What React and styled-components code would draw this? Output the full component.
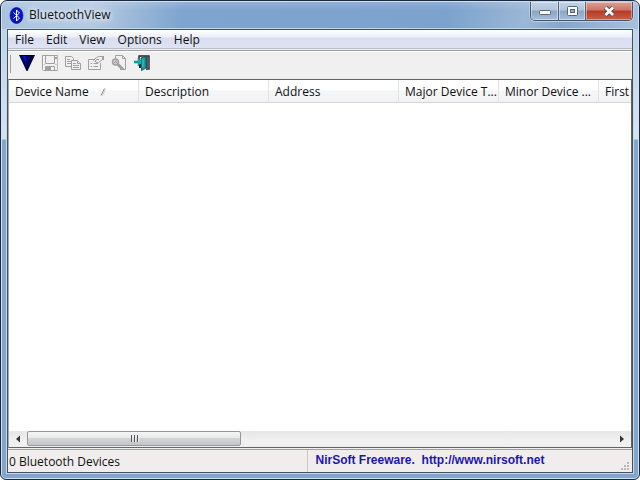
import React from "react";
import styled, { createGlobalStyle } from "styled-components";

//
// Component Styles
//
const GlobalStyle = createGlobalStyle`
    * {
        box-sizing: border-box;
    }

    body {
        margin: 0;
        background: #fff;
        font-family: "Open Sans", "Noto Sans", sans-serif;
        font-size: 12px;
        color: #111;
    }

    button {
        font: inherit;
        color: inherit;
        border: 0;
        padding: 0;
        background: none;
    }
`;

const Window = styled.div`
    display: flex;
    flex-direction: column;
    min-height: 100vh;
    padding: 0 6px 6px;
    border: 1px solid #1b2940;
    border-radius: 7px 7px 6px 6px;
    box-shadow: inset 0 0 0 1px #cfe2f3;
    background: linear-gradient(#b9cee5 0, #d7e4f0 138px, #86a5ca 139px, #84a4cb 100%);
`;

const TitleBar = styled.header`
    display: flex;
    align-items: flex-start;
    height: 27px;
    margin: 1px -5px 0;
    padding-left: 7px;
    border-radius: 5px 5px 0 0;
    background:
        linear-gradient(rgba(255, 255, 255, 0.15), rgba(255, 255, 255, 0) 30%),
        linear-gradient(100deg, #a9c3df 0, #b4cae2 90px, #7fa4cf 180px, #7ca2cd 70%, #9bb7d6 82%, #84a7cf 88%, #a8c1dd 100%);
`;

const Title = styled.h1`
    flex: 1;
    margin: 0 0 0 5px;
    font-size: 12px;
    font-weight: 400;
    line-height: 26px;
    text-shadow: 0 0 6px #fff, 0 0 8px #fff;
`;

const TitleIcon = styled.svg`
    margin-top: 4px;
`;

const Captions = styled.div`
    display: flex;
    margin-right: 5px;
    border: 1px solid #43546c;
    border-top: 0;
    border-radius: 0 0 5px 5px;
    overflow: hidden;
    box-shadow: 0 0 0 1px #bdd2e8;
`;

const Caption = styled.button`
    display: flex;
    align-items: center;
    justify-content: center;
    width: ${(props) => (props.$close ? 47 : 27)}px;
    height: 18px;
    border-left: ${(props) => (props.$first ? "0" : "1px solid #54657d")};
    box-shadow: inset 0 0 0 1px rgba(255, 255, 255, 0.4);
    background: ${(props) =>
        props.$close
            ? "linear-gradient(#dda093 0, #cb7565 45%, #b83a25 50%, #c9604a 100%)"
            : "linear-gradient(#c3d3e6 0, #b0c4dc 45%, #8ba6c5 50%, #a4bedb 100%)"};
`;

const Client = styled.div`
    display: flex;
    flex: 1;
    flex-direction: column;
    border: 1px solid #43535f;
    background: #f0f0f0;
    box-shadow: 0 0 0 1px #c1d8e9;
`;

const MenuBar = styled.nav`
    display: flex;
    height: 21px;
    padding-left: 1px;
    border-bottom: 1px solid #a0a0a0;
    background: linear-gradient(#fff 0, #eceff8 7px, #d8deef 8px, #dee3f3 18px, #b8bdca 18px, #b8bdca 19px, #f0f0f0 19px);
`;

const MenuItem = styled.button`
    padding: 0 6px;
    line-height: 20px;
`;

const ToolBar = styled.div`
    display: flex;
    align-items: flex-start;
    height: 28px;
    padding: 3px 2px 0;
    border-top: 1px solid #fff;
`;

const Grip = styled.span`
    width: 1px;
    height: 18px;
    margin-right: 4px;
    background: #a0a0a0;
`;

const ToolButton = styled.button`
    display: flex;
    justify-content: center;
    width: 23px;
    height: 16px;
`;

const ListView = styled.main`
    display: flex;
    flex: 1;
    flex-direction: column;
    border: 1px solid #646464;
    border-left-color: #a5a9ad;
    background: #fff;
`;

const ListBody = styled.div`
    flex: 1;
    overflow: hidden;
`;

const Table = styled.table`
    width: 100%;
    table-layout: fixed;
    border-collapse: separate;
    border-spacing: 0;
`;

const HeadCell = styled.th`
    width: ${(props) => (props.$width ? `${props.$width}px` : "auto")};
    height: 23px;
    padding: 2px 0 0 6px;
    overflow: hidden;
    border-right: ${(props) => (props.$width ? "1px solid #dfe3e8" : "0")};
    border-bottom: 1px solid #d5d5d5;
    background: linear-gradient(#fff 0, #fff 45%, #f5f6f8 50%, #f1f2f4 100%);
    font-weight: 400;
    line-height: 20px;
    text-align: left;
    white-space: nowrap;
`;

const SortMark = styled.svg`
    margin-left: 11px;
`;

const ScrollBar = styled.div`
    display: flex;
    height: 16px;
    background: linear-gradient(#e6e6e6, #f0f0f0 60%);
`;

const ScrollArrow = styled.button`
    display: flex;
    align-items: center;
    justify-content: center;
    width: 18px;
`;

const Track = styled.div`
    flex: 1;
`;

const Thumb = styled.div`
    display: flex;
    align-items: center;
    justify-content: center;
    width: 36.6%;
    height: 15px;
    border: 1px solid #979797;
    border-radius: 2px;
    background: linear-gradient(#f5f5f5 0, #e9e9eb 45%, #d3d3d8 50%, #c4c5cb 100%);
`;

const StatusBar = styled.footer`
    display: flex;
    height: 23px;
    margin-top: 1px;
    border-top: 1px solid #a0a0a0;
    background: #f1edec;
`;

const StatusText = styled.div`
    width: 48%;
    padding-left: 1px;
    border-right: 1px solid #c8c6c6;
    line-height: 24px;
`;

const StatusLink = styled.a`
    flex: 1;
    padding-left: 8px;
    color: #1c16b0;
    font: bold 12px "Liberation Sans", Arial, sans-serif;
    line-height: 20px;
    text-decoration: none;
    white-space: pre;
`;

const SizeGrip = styled.svg`
    align-self: flex-end;
`;

//
// Icons
//
const BluetoothIcon = () => (
    <TitleIcon width="15" height="18" viewBox="0 0 15 18" aria-hidden="true">
        <ellipse cx="7.5" cy="9.5" rx="6.5" ry="8" fill="#0a14c8" stroke="#000a78" strokeWidth="0.6" />
        <path d="M4.5 6.5 10.5 12 7.5 15V4l3 3-6 5.5" fill="none" stroke="#fff" />
    </TitleIcon>
);

const MinimizeIcon = () => (
    <svg width="14" height="10" viewBox="0 0 14 10">
        <rect x="1.5" y="4.5" width="11" height="4" rx="1" fill="#fff" stroke="#56657b" />
    </svg>
);

const MaximizeIcon = () => (
    <svg width="13" height="12" viewBox="0 0 13 12">
        <rect x="1.5" y="1.5" width="10" height="9" rx="1" fill="#fff" stroke="#56657b" />
        <rect x="4.5" y="4.5" width="4" height="3" fill="#92abc8" stroke="#56657b" />
    </svg>
);

const CloseIcon = () => (
    <svg width="15" height="12" viewBox="0 0 15 12">
        <path d="M3.5 2.5 11 10M11 2.5 3.5 10" stroke="#5d4650" strokeWidth="4.6" />
        <path d="M3.5 2.5 11 10M11 2.5 3.5 10" stroke="#fff" strokeWidth="2.8" />
    </svg>
);

const TriangleIcon = () => (
    <svg width="16" height="16" viewBox="0 0 16 16">
        <path d="M0 0H16L8.5 16H7.5Z" fill="#000038" />
        <path d="M1.5 1H11L7.5 14Z" fill="#000080" />
        <path d="M3 1H7L7 8Z" fill="#1010a0" />
    </svg>
);

const SaveIcon = () => (
    <svg width="16" height="16" viewBox="0 0 16 16" fill="none" stroke="#a0a0a0">
        <path d="M0.5 0.5H15.5V15.5H1.5L0.5 14.5Z" />
        <path d="M3.5 0.5V8.5H12.5V0.5M3.5 15V11.5H12.5V15M1.5 9.5H2.5M13.5 9.5H14.5" />
        <path d="M4 12H9V15H4ZM13 2H15V4H13Z" fill="#a0a0a0" stroke="none" />
        <path d="M1.5 15V1.5H3M16 16V1" stroke="#fff" strokeWidth="0.5" />
    </svg>
);

const CopyIcon = () => (
    <svg width="16" height="16" viewBox="0 0 16 16" fill="#f0f0f0" stroke="#a0a0a0">
        <path d="M0.5 1.5H6.5L8.5 3.5V11.5H0.5Z" />
        <path d="M2 4.5H5M2 6.5H6M2 8.5H6" />
        <path d="M6.5 5.5H12.5L15.5 8.5V14.5H6.5Z" />
        <path d="M12.5 5.5V8.5H15.5M8 8.5H11M8 10.5H14M8 12.5H14" />
    </svg>
);

const PropertiesIcon = () => (
    <svg width="16" height="16" viewBox="0 0 16 16" fill="none" stroke="#a0a0a0">
        <path d="M6.5 4.5H0.5V14.5H12.5V8" />
        <path d="M2.5 8.5H4M5.5 8.5H10M2.5 11.5H4M5.5 11.5H10" />
        <path d="M5 5.5 8.5 2.5 10.5 1.5H14.5M14.5 4.5 10.5 7.5H8.5L7 6M8.5 4.5H11M6.5 6.5 9.5 4" />
        <path d="M14 1H16V5H14Z" fill="#a0a0a0" stroke="none" />
    </svg>
);

const FindIcon = () => (
    <svg width="16" height="16" viewBox="0 0 16 16" fill="none" stroke="#a0a0a0">
        <path d="M4.5 4V0.5H11.5L14.5 3.5V14.5H9M11.5 0.5V3.5H14.5" />
        <circle cx="4.5" cy="7" r="3" fill="#d0d0d0" strokeWidth="1.4" />
        <path d="M3 8 5.5 5.5M4.5 8.5 6 7" />
        <path d="M6.5 9 12 14.5" strokeWidth="3" />
    </svg>
);

const ExitIcon = () => (
    <svg width="16" height="16" viewBox="0 0 16 16">
        <path d="M5 5V1H15V14H12" fill="none" stroke="#222" strokeWidth="1.4" />
        <path d="M12 2H14.5V14H12Z" fill="#4c5c5c" />
        <path d="M5 9H7V13H5Z" fill="#222" />
        <path d="M7 3 12 1.5V13L7.5 15.5Z" fill="#14a0a0" stroke="#0c4a4c" strokeWidth="0.8" />
        <path d="M9 4.5V12" stroke="#3cc8c6" />
        <path d="M0 6H4V3L8 7 4 11V8H0Z" fill="#10b0b0" stroke="#087778" strokeWidth="0.5" />
    </svg>
);

const menus = ["File", "Edit", "View", "Options", "Help"];

const tools = [
    { label: "Start scan", Icon: TriangleIcon },
    { label: "Save", Icon: SaveIcon },
    { label: "Copy", Icon: CopyIcon },
    { label: "Properties", Icon: PropertiesIcon },
    { label: "Find", Icon: FindIcon },
    { label: "Exit", Icon: ExitIcon },
];

const columns = [
    { name: "Device Name", width: 130, sorted: true },
    { name: "Description", width: 130 },
    { name: "Address", width: 130 },
    { name: "Major Device T...", width: 100 },
    { name: "Minor Device ...", width: 100 },
    { name: "First" },
];

const App = () => {
    return (
        <>
            <GlobalStyle />
            <Window>
                <TitleBar>
                    <BluetoothIcon />
                    <Title>BluetoothView</Title>
                    <Captions>
                        <Caption $first aria-label="Minimize"><MinimizeIcon /></Caption>
                        <Caption aria-label="Maximize"><MaximizeIcon /></Caption>
                        <Caption $close aria-label="Close"><CloseIcon /></Caption>
                    </Captions>
                </TitleBar>

                <Client>
                    <MenuBar>
                        {menus.map((menu) => (
                            <MenuItem key={menu}>{menu}</MenuItem>
                        ))}
                    </MenuBar>

                    <ToolBar>
                        <Grip />
                        {tools.map(({ label, Icon }) => (
                            <ToolButton key={label} aria-label={label}><Icon /></ToolButton>
                        ))}
                    </ToolBar>

                    <ListView>
                        <ListBody>
                            <Table>
                                <thead>
                                    <tr>
                                        {columns.map((column) => (
                                            <HeadCell key={column.name} $width={column.width}>
                                                {column.name}
                                                {column.sorted && (
                                                    <SortMark width="6" height="8" viewBox="0 0 6 8" aria-hidden="true">
                                                        <path d="M1 7.5 4.5 0.5" stroke="#8c8c8c" />
                                                        <path d="M2.5 7.5 5.5 1" stroke="#c8c8c8" />
                                                    </SortMark>
                                                )}
                                            </HeadCell>
                                        ))}
                                    </tr>
                                </thead>
                            </Table>
                        </ListBody>

                        <ScrollBar>
                            <ScrollArrow aria-label="Scroll left">
                                <svg width="4" height="8" viewBox="0 0 4 8"><path d="M4 0.5V7.5L0 4Z" fill="#333" /></svg>
                            </ScrollArrow>
                            <Track>
                                <Thumb>
                                    <svg width="9" height="7" viewBox="0 0 9 7">
                                        <path d="M1.5 0V7M4.5 0V7M7.5 0V7" stroke="#555" />
                                        <path d="M2.5 0V7M5.5 0V7M8.5 0V7" stroke="#eee" />
                                    </svg>
                                </Thumb>
                            </Track>
                            <ScrollArrow aria-label="Scroll right">
                                <svg width="4" height="8" viewBox="0 0 4 8"><path d="M0 0.5V7.5L4 4Z" fill="#333" /></svg>
                            </ScrollArrow>
                        </ScrollBar>
                    </ListView>

                    <StatusBar>
                        <StatusText>0 Bluetooth Devices</StatusText>
                        <StatusLink href="http://www.nirsoft.net">{"NirSoft Freeware.  http://www.nirsoft.net"}</StatusLink>
                        <SizeGrip width="11" height="11" viewBox="0 0 11 11" aria-hidden="true">
                            <path d="M6 1h2v2h-2zM3 4h2v2h-2zM6 4h2v2h-2zM0 7h2v2h-2zM3 7h2v2h-2zM6 7h2v2h-2z" fill="#bcb8b6" />
                        </SizeGrip>
                    </StatusBar>
                </Client>
            </Window>
        </>
    );
};

export default App;
